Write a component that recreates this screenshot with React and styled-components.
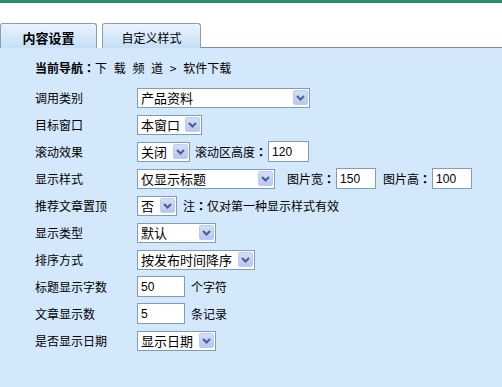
import React from "react"
import styled, { createGlobalStyle } from "styled-components"

const GlobalStyle = createGlobalStyle`
  html, body {
    margin: 0;
    padding: 0;
    background: #fff;
  }
  body {
    font-family: "Noto Sans CJK SC", "DejaVu Sans", sans-serif;
    font-size: 12px;
    color: #000;
  }
`

const Page = styled.div`
  width: 502px;
  height: 387px;
  display: flex;
  flex-direction: column;
  overflow: hidden;
`

const TopLine = styled.div`
  height: 3px;
  background: #2f8b6d;
`

const TabBar = styled.div`
  display: flex;
  height: 25px;
  margin-top: 20px;
`

const Tab = styled.div`
  width: ${p => p.$width}px;
  box-sizing: border-box;
  border: 1px solid #8d9db0;
  border-bottom: none;
  border-radius: 3px 3px 0 0;
  background: linear-gradient(#eaf3fc, #c5dff6);
  display: flex;
  align-items: center;
  justify-content: center;
  padding-top: 2px;
  font-size: ${p => (p.$active ? 13 : 12)}px;
  font-weight: ${p => (p.$active ? 700 : 400)};
`

const TabGap = styled.div`
  width: 5px;
`

const TabFiller = styled.div`
  flex: 1;
  border-bottom: 1px solid #7d8c9c;
`

const Panel = styled.div`
  flex: 1;
  background: #d3e8fb;
  padding: 10px 0 0 35px;
`

const Crumb = styled.div`
  height: 20px;
  line-height: 20px;
  margin-bottom: 6px;
  word-spacing: 4px;

  b {
    word-spacing: 0;
  }
`

// full-width colon, centred in its cell as in the reference
const Colon = styled.span`
  font-family: "Noto Sans CJK TC", "Noto Sans CJK SC", sans-serif;
  font-weight: 700;
  word-spacing: 0;
`

const Form = styled.div`
  display: grid;
  grid-template-columns: 102px 1fr;
  grid-auto-rows: 27px;
  align-items: center;
`

const Label = styled.div`
  font-size: 12px;
`

const Field = styled.div`
  display: flex;
  align-items: center;
`

const SelectBox = styled.div`
  width: ${p => p.$width}px;
  height: 20px;
  box-sizing: border-box;
  border: 1px solid #7f9db9;
  background: #fff;
  display: flex;
  align-items: center;
  padding-left: 3px;
  font-size: 13px;
`

const SelectText = styled.span`
  flex: 1;
  white-space: nowrap;
`

const Arrow = styled.span`
  width: 15px;
  height: 15px;
  margin-right: 1px;
  box-sizing: border-box;
  border: 1px solid #bccdf1;
  border-radius: 2px;
  background: linear-gradient(#d3def9, #b5c8f3);
  display: flex;
  align-items: center;
  justify-content: center;
`

const TextInput = styled.input`
  width: ${p => p.$width}px;
  height: 21px;
  box-sizing: border-box;
  border: 1px solid #7f9db9;
  background: #fff;
  padding: 0 3px;
  margin: 0 0 0 ${p => p.$gap || 0}px;
  font-family: "Liberation Sans", Arial, sans-serif;
  font-size: 12px;
  color: #000;
  outline: none;
`

const Note = styled.span`
  margin-left: ${p => p.$gap || 0}px;
  white-space: nowrap;
`

function Select({ width, value }) {
  return (
    <SelectBox $width={width}>
      <SelectText>{value}</SelectText>
      <Arrow>
        <svg width="9" height="6" viewBox="0 0 9 6">
          <path d="M1 1 L4.5 4.5 L8 1" stroke="#4b5f86" strokeWidth="2" fill="none" />
        </svg>
      </Arrow>
    </SelectBox>
  )
}

function Input({ width, value, gap }) {
  return <TextInput $width={width} $gap={gap} defaultValue={value} readOnly />
}

const rows = [
  { label: "调用类别", field: <Select width={173} value="产品资料" /> },
  { label: "目标窗口", field: <Select width={65} value="本窗口" /> },
  {
    label: "滚动效果",
    field: (
      <>
        <Select width={53} value="关闭" />
        <Note $gap={5}>滚动区高度<Colon>：</Colon></Note>
        <Input width={41} value="120" gap={1} />
      </>
    ),
  },
  {
    label: "显示样式",
    field: (
      <>
        <Select width={138} value="仅显示标题" />
        <Note $gap={12}>图片宽<Colon>：</Colon></Note>
        <Input width={40} value="150" gap={1} />
        <Note $gap={7}>图片高<Colon>：</Colon></Note>
        <Input width={40} value="100" gap={1} />
      </>
    ),
  },
  {
    label: "推荐文章置顶",
    field: (
      <>
        <Select width={40} value="否" />
        <Note $gap={6}>注<Colon>：</Colon>仅对第一种显示样式有效</Note>
      </>
    ),
  },
  { label: "显示类型", field: <Select width={79} value="默认" /> },
  { label: "排序方式", field: <Select width={118} value="按发布时间降序" /> },
  {
    label: "标题显示字数",
    field: (
      <>
        <Input width={48} value="50" />
        <Note $gap={6}>个字符</Note>
      </>
    ),
  },
  {
    label: "文章显示数",
    field: (
      <>
        <Input width={48} value="5" />
        <Note $gap={6}>条记录</Note>
      </>
    ),
  },
  { label: "是否显示日期", field: <Select width={79} value="显示日期" /> },
]

export default function App() {
  return (
    <>
      <GlobalStyle />
      <Page>
        <TopLine />
        <TabBar>
          <Tab $width={97} $active>内容设置</Tab>
          <TabGap />
          <Tab $width={99}>自定义样式</Tab>
          <TabFiller />
        </TabBar>
        <Panel>
          <Crumb>
            <b>当前导航<Colon>：</Colon></b>下 载 频 道 &gt; 软件下载
          </Crumb>
          <Form>
            {rows.map(({ label, field }) => (
              <React.Fragment key={label}>
                <Label>{label}</Label>
                <Field>{field}</Field>
              </React.Fragment>
            ))}
          </Form>
        </Panel>
      </Page>
    </>
  )
}
